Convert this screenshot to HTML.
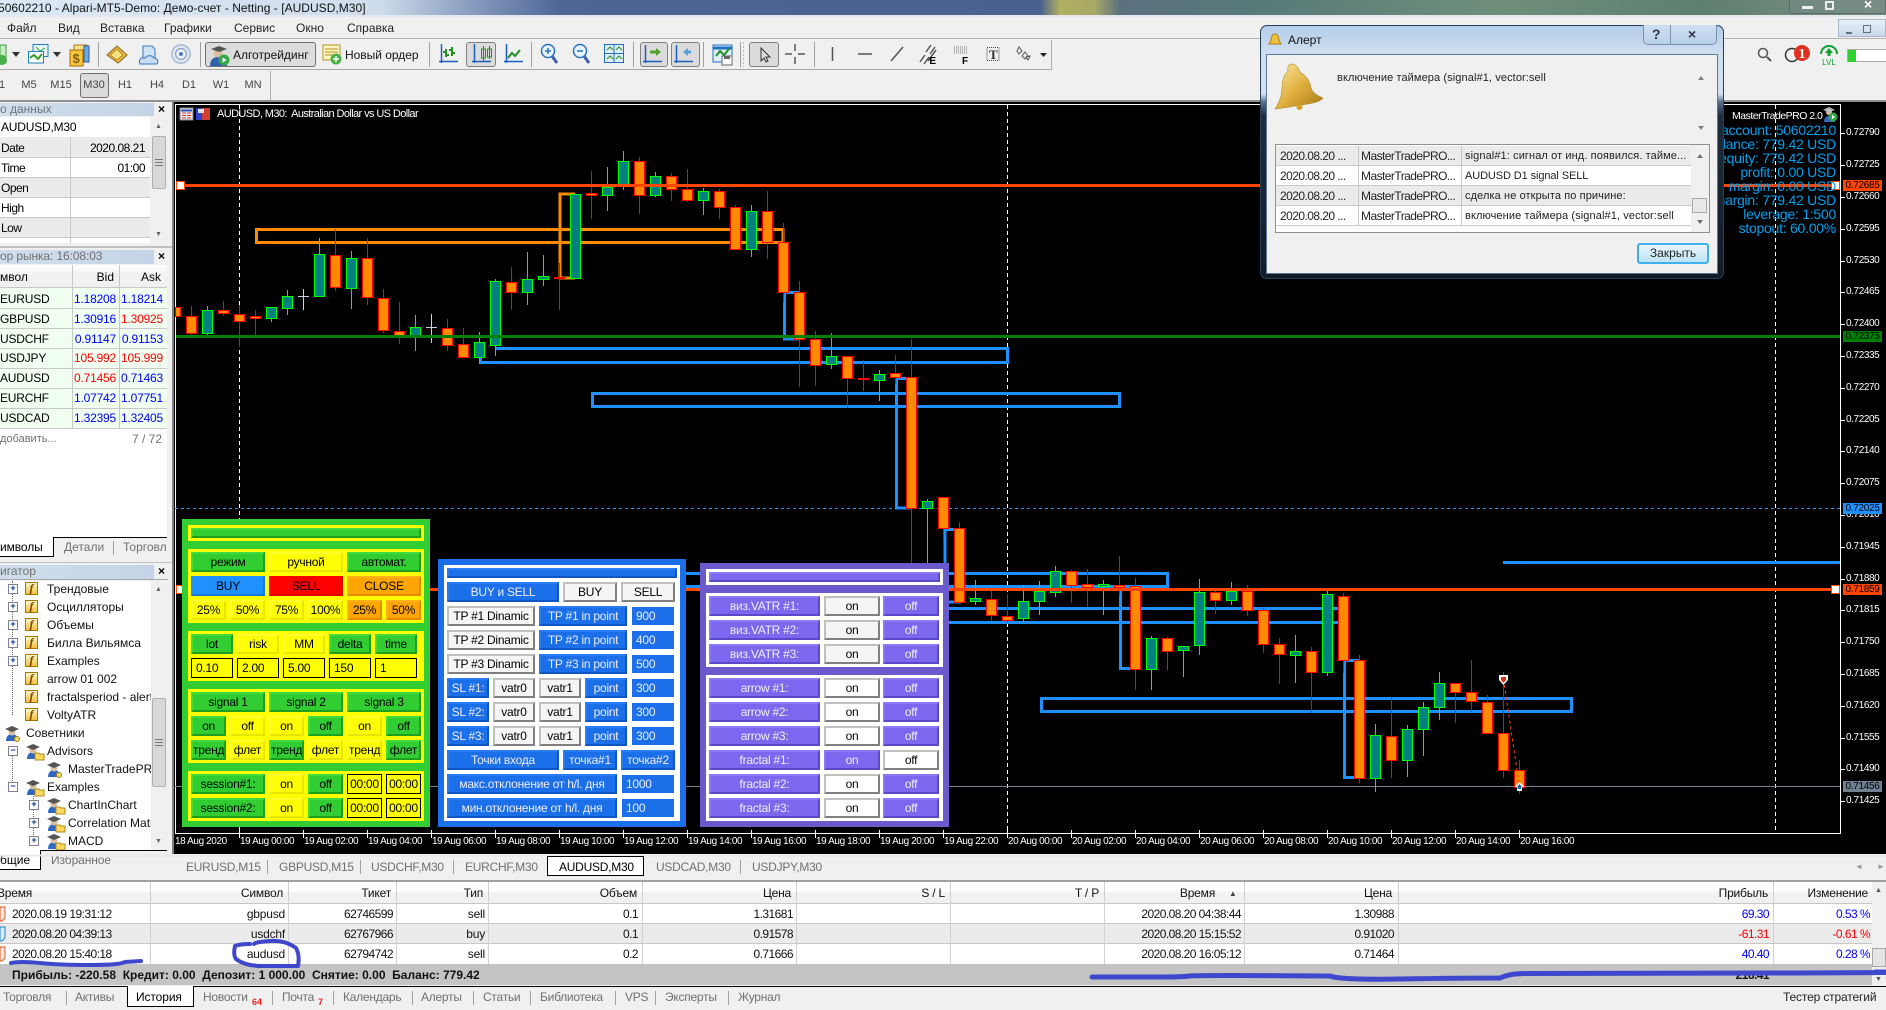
<!DOCTYPE html>
<html lang="ru"><head><meta charset="utf-8"><title>MT5</title>
<style>
html,body{margin:0;padding:0;background:#f0f0f0}
#p{position:relative;width:1886px;height:1010px;overflow:hidden;background:#f0f0f0;font:11px/14px "Liberation Sans",sans-serif;color:#000}
.t{position:absolute;white-space:nowrap;line-height:14px}
.s{position:absolute;background:#a0a0a0}
.f{position:absolute;box-sizing:border-box}
.g7{color:#707070}
.m{font-size:12px;color:#222}
.tf{font-size:11px;color:#444;transform:translateX(-50%)}
.b{position:absolute;box-sizing:border-box;height:20px;border:2px solid;text-align:center;line-height:16px;font-size:12px;letter-spacing:-.25px;white-space:nowrap;overflow:hidden}
.gr{background:#32cd32;border-color:#3fdc3f #1f9f1f #1f9f1f #3fdc3f}
.ye{background:#ff0;border-color:#ffff30 #e6e600 #e6e600 #ffff30}
.or{background:#ffa500;border-color:#ffb01a #e68a00 #e68a00 #ffb01a}
.bu{background:#1e90ff;border-color:#1e90ff #1878d8 #1878d8 #1e90ff}
.re{background:#f00;border-color:#f00 #e00000 #e00000 #f00}
.i{background:#ff0;border:1px solid #000;text-align:left;padding-left:4px;line-height:18px}
.ic{text-align:center;padding:0}
.B{background:#1b6fe8;border-color:#2a7cf0 #0f55c4 #0f55c4 #2a7cf0;color:#eef}
.W{background:#f5f5f5;border-color:#c0c0c0 #808080 #808080 #c0c0c0}
.E{background:#1b6fe8;border:0;color:#eef;text-align:left;padding-left:4px;height:18px;line-height:18px}
.P{background:#7b68ee;border-color:#8a78f4 #5a48c8 #5a48c8 #8a78f4;color:#f0f0f0}
.H{background:#fff;border-color:#c0c0c0 #808080 #808080 #c0c0c0}
.S{background:#f5f5f5;border-color:#c0c0c0 #808080 #808080 #c0c0c0}
.ax{position:absolute;color:#fff;font-size:10px;letter-spacing:-.4px;line-height:12px;white-space:nowrap}
.pl{position:absolute;left:1843px;width:39px;height:11px;line-height:11px;font-size:10px;letter-spacing:-.3px;text-align:center;color:#000}
.ti{position:absolute;right:50px;color:#00a0f0;font-size:14px;line-height:14px;letter-spacing:-.25px;white-space:nowrap}
.fi{position:absolute;width:11px;height:11px;border:1px solid #a87800;background:linear-gradient(#fff6c8,#f5c040);color:#7a4a00;font:italic bold 12px/11px "Liberation Serif",serif;text-align:center}
.tb{position:absolute;width:8px;height:8px;border:1px solid #808090;background:#fff;color:#003090;font:bold 9px/7px "Liberation Sans",sans-serif;text-align:center}
.tr{font-size:12px;color:#111}
.c{position:absolute;white-space:nowrap;color:#111;font-size:12px;letter-spacing:-.55px}
.v{position:absolute;width:1px;background:#d0d0d0}
.d{position:absolute;white-space:nowrap;color:#222;line-height:14px;font-size:12px;letter-spacing:-.55px}
.dw{font-size:12px;letter-spacing:-.5px}
</style></head><body><div id="p">

<!-- title bar -->
<div class="f" style="left:0;top:0;width:1886px;height:17px;background:linear-gradient(90deg,#dbe8f5 0,#cfdcec 380px,#8fa3c4 460px,#4f6595 560px,#4a6090 1040px,#b0b060 1060px,#a8a868 1095px,#5a7080 1120px,#587a78 1260px,#6f8f7a 1500px,#5f7f70 1700px,#7a9080 1886px);border-bottom:2px solid #e4e8ee"></div>
<div class="t" style="left:-2px;top:1px;font-size:12px;letter-spacing:.03px;color:#111">50602210 - Alpari-MT5-Demo: Демо-счет - Netting - [AUDUSD,M30]</div>
<div class="f" style="left:1789px;top:-4px;width:97px;height:18px;border:1px solid #5a6a70;border-radius:3px;background:rgba(120,140,140,.4)"></div>
<div class="f" style="left:1802px;top:6px;width:11px;height:3px;background:#eee"></div>
<div class="f" style="left:1825px;top:1px;width:9px;height:9px;border:2px solid #eee"></div>
<div class="t" style="left:1864px;top:-3px;color:#fff;font-weight:bold;font-size:14px">×</div>

<!-- menu -->
<div class="t m" style="left:7px;top:21px">Файл</div><div class="t m" style="left:58px;top:21px">Вид</div><div class="t m" style="left:100px;top:21px">Вставка</div><div class="t m" style="left:164px;top:21px">Графики</div><div class="t m" style="left:234px;top:21px">Сервис</div><div class="t m" style="left:296px;top:21px">Окно</div><div class="t m" style="left:347px;top:21px">Справка</div>
<div class="s" style="left:0;top:38px;width:1886px;height:1px;background:#b4b4b4"></div>
<div class="f" style="left:1838px;top:19px;width:48px;height:18px;background:linear-gradient(#e8f0f8,#c8d8ea);border:1px solid #a8b8c8"></div>
<div class="s" style="left:1846px;top:32px;width:6px;height:2px;background:#607080"></div><div class="f" style="left:1863px;top:25px;width:8px;height:8px;border:1px solid #607080"></div>

<!-- toolbar -->
<div class="s" style="left:0;top:69px;width:1052px;height:1px;background:#a8a8a8"></div>
<div class="s" style="left:1051px;top:40px;width:1px;height:30px;background:#b0b0b0"></div>
<div class="s" style="left:98px;top:42px;width:1px;height:25px"></div><div class="s" style="left:200px;top:42px;width:1px;height:25px"></div><div class="s" style="left:429px;top:42px;width:1px;height:25px"></div><div class="s" style="left:531px;top:42px;width:1px;height:25px"></div><div class="s" style="left:633px;top:42px;width:1px;height:25px"></div><div class="s" style="left:703px;top:42px;width:1px;height:25px"></div><div class="s" style="left:740px;top:42px;width:1px;height:25px"></div><div class="s" style="left:814px;top:42px;width:1px;height:25px"></div>
<div class="f" style="left:205px;top:42px;width:111px;height:25px;border:1px solid #707070;border-radius:3px;background:#dcdcdc"></div>
<div class="f" style="left:466px;top:42px;width:30px;height:25px;border:1px solid #808080;border-radius:3px;background:#dcdcdc"></div>
<div class="f" style="left:640px;top:42px;width:28px;height:25px;border:1px solid #808080;border-radius:3px;background:#dcdcdc"></div>
<div class="f" style="left:671px;top:42px;width:29px;height:25px;border:1px solid #808080;border-radius:3px;background:#dcdcdc"></div>
<div class="f" style="left:749px;top:42px;width:30px;height:25px;border:1px solid #808080;border-radius:3px;background:#dcdcdc"></div>
<div class="t" style="left:233px;top:48px;font-size:12px;letter-spacing:-.02px;color:#111">Алготрейдинг</div>
<div class="t" style="left:345px;top:48px;font-size:12px;letter-spacing:-.02px;color:#111">Новый ордер</div>
<svg style="position:absolute;left:0;top:0" width="1886" height="102" viewBox="0 0 1886 102" fill="none">
<path d="M0 45h6v18H0z" fill="#c8ecc8" stroke="#3aa03a"/><circle cx="2" cy="60" r="5" fill="#48b048"/>
<path d="M12 52h8l-4 5zM53 52h8l-4 5z" fill="#333"/>
<path d="M33 44.500h15v12H33z" fill="#e8f4fc" stroke="#2080c0"/><path d="M28.500 51.500h15v11.500h-15z" fill="#fff" stroke="#2080c0"/><path d="M30 58l4-3 4 4 4-5" stroke="#30a030" stroke-width="2"/><path d="M36 47l4 4 5-3" stroke="#30a030"/>
<path d="M74 45h13v17H74z" fill="#ffe088" stroke="#b07818"/><path d="M70 50h13v16H70z" fill="#f8c840" stroke="#a86800"/><path d="M84 46h5v16h-5z" fill="#70a8e0" stroke="#3060a0"/>
<text x="72.500" y="63" font-family="Liberation Sans" font-size="13" font-weight="bold" fill="#806000">$</text>
<path d="M107 55l10-9 10 9-9 8z" fill="#e8c050" stroke="#906010"/><path d="M110 55l7-6 6 6-6 5z" fill="#f8e080" stroke="#b88010"/>
<path d="M143 46h9l3 3v9h-12z" fill="#d0e4f8" stroke="#3878c0"/><path d="M140 64c-2-5 2-7 5-6 2-3 7-3 9 0 3 0 5 3 3 6z" fill="#c8dcf4" stroke="#3878c0"/>
<circle cx="181" cy="54" r="9" stroke="#b0c4e0" stroke-width="2"/><circle cx="181" cy="54" r="5.500" stroke="#90a8d0" stroke-width="1.500"/><circle cx="181" cy="54" r="2" fill="#5078c0"/>
<path d="M210 66c0-6 3-9 8-9s9 2 9 9z" fill="#3060b0"/><circle cx="218" cy="53" r="4.500" fill="#d8c0a0"/><path d="M211 49l8-3 8 3-8 3z" fill="#555"/><circle cx="224" cy="60" r="5.500" fill="#38a848"/><path d="M222.500 57.500l4 2.500-4 2.500z" fill="#fff"/>
<path d="M323 45h17v15h-17z" fill="#fff6c0" stroke="#b89020"/><path d="M325 49h13M325 52h13M325 55h13" stroke="#b89020"/><circle cx="336" cy="59" r="5.500" fill="#48b048"/><path d="M333 59h6M336 56v6" stroke="#fff" stroke-width="1.500"/>
<path d="M441.500 44v19M439 61.500h19" stroke="#1a5fc0" stroke-width="1.500"/><path d="M446 49v8M443 52h3M446 55h3M452 47v9M449 50h3M452 53h3" stroke="#209020" stroke-width="2"/>
<path d="M474.500 44v19M472 61.500h19" stroke="#1a5fc0" stroke-width="1.500"/><path d="M481.500 49h4v9h-4zM487.500 49h4v8h-4z" stroke="#209020"/><path d="M483.500 46v15M489.500 46v13" stroke="#209020"/>
<path d="M506.500 44v19M504 61.500h19" stroke="#1a5fc0" stroke-width="1.500"/><path d="M508 58l4-5 3 3 5-6" stroke="#209020" stroke-width="2"/>
<circle cx="548" cy="51" r="6.500" fill="#e8f4ff" stroke="#2a70c0" stroke-width="1.500"/><path d="M545 51h6M548 48v6" stroke="#2a70c0" stroke-width="1.500"/><path d="M552 56l5 7" stroke="#4060a0" stroke-width="3"/>
<circle cx="580" cy="51" r="6.500" fill="#e8f4ff" stroke="#2a70c0" stroke-width="1.500"/><path d="M577 51h6" stroke="#2a70c0" stroke-width="1.500"/><path d="M584 56l5 7" stroke="#4060a0" stroke-width="3"/>
<path d="M604.500 44.500h19v18h-19z" fill="#e0f0fa" stroke="#2070c0"/><path d="M604 53.500h20M614 44v19" stroke="#2070c0"/><path d="M607 50l3-3 3 3M616 50l3-3 3 3M607 59l3-3 3 3M616 59l3-3 3 3" stroke="#209020"/>
<path d="M645.500 45v18M643 61.500h19" stroke="#1a5fc0" stroke-width="1.500"/><path d="M650 52h7" stroke="#50a030" stroke-width="3"/><path d="M656 48l5 4-5 4z" fill="#50a030"/>
<path d="M676.500 45v18M674 61.500h19" stroke="#1a5fc0" stroke-width="1.500"/><path d="M691 52h-5" stroke="#50a0e0" stroke-width="3"/><path d="M688 48l-5 4 5 4z" fill="#50a0e0"/>
<path d="M713 45h19v17h-19z" fill="#e0f0fa" stroke="#2070c0"/><path d="M713 48h19" stroke="#2070c0" stroke-width="3"/><path d="M716 56l4-5 4 4 5-6" stroke="#209020" stroke-width="2"/><path d="M722 56h10v9h-10z" fill="#fff" stroke="#666"/><path d="M724 56h6v3h-6z" fill="#666"/>
<path d="M743.500 42v25" stroke="#bbb" stroke-dasharray="2 2"/>
<path d="M761 48l0 13 3-3 2 4 2-1-2-4h4z" fill="#ddd" stroke="#333"/>
<path d="M795 44v7M795 57v7M785 54h7M798 54h7" stroke="#555" stroke-width="1.500"/>
<path d="M832.500 47v14" stroke="#555" stroke-width="1.500"/><path d="M858 54h14" stroke="#555" stroke-width="1.500"/><path d="M891 61l12-14" stroke="#555" stroke-width="1.500"/>
<path d="M920 62l5-7M924 64l5-7M926 52l5-7M930 54l5-7M928 61l8-11" stroke="#555" stroke-width="1.500"/>
<path d="M954 47h13M954 49h13M954 51h13M954 53h13" stroke="#777" stroke-dasharray="1 1"/>
<text x="936" y="64" font-family="Liberation Sans" font-size="10" font-weight="bold" fill="#000" text-anchor="end">E</text>
<text x="962" y="64" font-family="Liberation Sans" font-size="10" font-weight="bold" fill="#000">F</text>
<path d="M987 47.500h12v13h-12z" stroke="#444" stroke-dasharray="1 1"/>
<text x="989" y="59" font-family="Liberation Serif" font-size="13" font-weight="bold" fill="#333">T</text>
<path d="M1019 47l3 4-3 3-2-3zM1025 52l3 4-3 3-3-3zM1030 56l-2 4-2-3z" stroke="#555"/>
<path d="M1040 53h7l-3.500 4z" fill="#222"/>
<circle cx="1763" cy="53" r="4.500" stroke="#555" stroke-width="1.500"/><path d="M1767 57l4 4" stroke="#555" stroke-width="2"/>
<circle cx="1792" cy="55" r="6.500" stroke="#333" stroke-width="1.500"/><circle cx="1802" cy="53" r="8" fill="#e03020"/>
<text x="1802" y="58" font-family="Liberation Serif" font-size="14" font-weight="bold" fill="#fff" text-anchor="middle">1</text>
<path d="M1821 54a8 8 0 0 1 16 0" stroke="#10a030" stroke-width="2"/><path d="M1829 48l-4 5h2.500v3h3v-3h2.500z" fill="#10a030"/>
<text x="1829" y="65" font-family="Liberation Sans" font-size="8" fill="#10a030" text-anchor="middle">LVL</text>
<rect x="1847.500" y="49.500" width="39" height="12" fill="#fff" stroke="#aaa"/><rect x="1848" y="50" width="8" height="12" fill="#30d030"/>
</svg>

<!-- timeframes -->
<div class="f" style="left:80px;top:73px;width:29px;height:25px;border:1px solid #707070;border-radius:3px;background:#dcdcdc"></div>
<div class="t tf" style="left:2px;top:78px">1</div><div class="t tf" style="left:29px;top:78px">M5</div><div class="t tf" style="left:61px;top:78px">M15</div><div class="t tf" style="left:94px;top:78px">M30</div><div class="t tf" style="left:125px;top:78px">H1</div><div class="t tf" style="left:157px;top:78px">H4</div><div class="t tf" style="left:189px;top:78px">D1</div><div class="t tf" style="left:221px;top:78px">W1</div><div class="t tf" style="left:253px;top:78px">MN</div>
<div class="s" style="left:270px;top:71px;width:1px;height:29px;background:#b0b0b0"></div>
<div class="s" style="left:0;top:100px;width:1886px;height:2px;background:#909090"></div>

<!-- data window -->
<div class="f" style="left:0;top:103px;width:154px;height:13px;background:linear-gradient(90deg,#d0deec,#c4d4e6)"></div>
<div class="t g7" style="left:0;top:102px;font-size:12px">о данных</div>
<div class="t" style="left:158px;top:102px;font-weight:bold;font-size:12px">×</div>
<div class="f" style="left:0;top:117px;width:150px;height:20px;background:#fff"></div>
<div class="t" style="left:1px;top:120px;font-size:12px;letter-spacing:-.2px">AUDUSD,M30</div>
<div class="f" style="left:0;top:137px;width:150px;height:20px;background:#ebebeb"></div><div class="f" style="left:0;top:157px;width:150px;height:20px;background:#fff"></div><div class="f" style="left:0;top:177px;width:150px;height:20px;background:#ebebeb"></div><div class="f" style="left:0;top:197px;width:150px;height:20px;background:#fff"></div><div class="f" style="left:0;top:217px;width:150px;height:20px;background:#ebebeb"></div><div class="f" style="left:0;top:237px;width:150px;height:6px;background:#fff"></div>
<div class="s" style="left:0;top:157px;width:150px;height:1px;background:#c8c8c8"></div><div class="s" style="left:0;top:177px;width:150px;height:1px;background:#c8c8c8"></div><div class="s" style="left:0;top:197px;width:150px;height:1px;background:#c8c8c8"></div><div class="s" style="left:0;top:217px;width:150px;height:1px;background:#c8c8c8"></div><div class="s" style="left:0;top:237px;width:150px;height:1px;background:#c8c8c8"></div>
<div class="s" style="left:70px;top:137px;width:1px;height:106px;background:#c8c8c8"></div>
<div class="t dw" style="left:1px;top:141px">Date</div><div class="t dw" style="right:1741px;top:141px">2020.08.21</div><div class="t dw" style="left:1px;top:161px">Time</div><div class="t dw" style="right:1741px;top:161px">01:00</div><div class="t dw" style="left:1px;top:181px">Open</div><div class="t dw" style="left:1px;top:201px">High</div><div class="t dw" style="left:1px;top:221px">Low</div>
<div class="f" style="left:152px;top:117px;width:15px;height:126px;background:#f0f0f0"></div>
<div class="f" style="left:152px;top:136px;width:14px;height:53px;background:#d8d8d8;border:1px solid #b0b0b0;border-radius:2px"></div>
<div class="t" style="left:155px;top:120px;font-size:7px;color:#666">▲</div><div class="t" style="left:155px;top:228px;font-size:7px;color:#666">▼</div>
<div class="s" style="left:155px;top:159px;width:8px;height:1px;background:#777"></div><div class="s" style="left:155px;top:162px;width:8px;height:1px;background:#777"></div><div class="s" style="left:155px;top:165px;width:8px;height:1px;background:#777"></div>
<div class="s" style="left:0;top:246px;width:172px;height:2px;background:#c0c0c0"></div>

<!-- market watch -->
<div class="f" style="left:0;top:250px;width:154px;height:14px;background:linear-gradient(90deg,#d0deec,#c4d4e6)"></div>
<div class="t g7" style="left:0;top:249px;font-size:12px;letter-spacing:-.1px">ор рынка: 16:08:03</div>
<div class="t" style="left:158px;top:249px;font-weight:bold;font-size:12px">×</div>
<div class="f" style="left:0;top:265px;width:167px;height:23px;background:linear-gradient(#fff,#f2f2f2 40%,#f0f0f0);border-bottom:1px solid #c8c8c8"></div>
<div class="f" style="left:0;top:288px;width:167px;height:140px;background:#f0fff0"></div>
<div class="f" style="left:0;top:428px;width:167px;height:109px;background:#fff"></div>
<div class="t dw" style="left:0;top:270px;letter-spacing:0">мвол</div><div class="t" style="right:1772px;top:270px;font-size:12px">Bid</div><div class="t" style="right:1725px;top:270px;font-size:12px">Ask</div>
<div class="s" style="left:0;top:308px;width:167px;height:1px;background:#c8c8c8"></div><div class="s" style="left:0;top:328px;width:167px;height:1px;background:#c8c8c8"></div><div class="s" style="left:0;top:348px;width:167px;height:1px;background:#c8c8c8"></div><div class="s" style="left:0;top:368px;width:167px;height:1px;background:#c8c8c8"></div><div class="s" style="left:0;top:388px;width:167px;height:1px;background:#c8c8c8"></div><div class="s" style="left:0;top:408px;width:167px;height:1px;background:#c8c8c8"></div><div class="s" style="left:0;top:428px;width:167px;height:1px;background:#c8c8c8"></div>
<div class="s" style="left:72px;top:265px;width:1px;height:163px;background:#c8c8c8"></div><div class="s" style="left:119px;top:265px;width:1px;height:163px;background:#c8c8c8"></div>
<div class="t" style="left:0;top:292px;font-size:12px;letter-spacing:-.2px">EURUSD</div><div class="t" style="right:1770px;top:292px;font-size:12px;letter-spacing:-.2px;color:#00f">1.18208</div><div class="t" style="right:1723px;top:292px;font-size:12px;letter-spacing:-.2px;color:#00f">1.18214</div>
<div class="t" style="left:0;top:312px;font-size:12px;letter-spacing:-.2px">GBPUSD</div><div class="t" style="right:1770px;top:312px;font-size:12px;letter-spacing:-.2px;color:#00f">1.30916</div><div class="t" style="right:1723px;top:312px;font-size:12px;letter-spacing:-.2px;color:#f00">1.30925</div>
<div class="t" style="left:0;top:332px;font-size:12px;letter-spacing:-.2px">USDCHF</div><div class="t" style="right:1770px;top:332px;font-size:12px;letter-spacing:-.2px;color:#00f">0.91147</div><div class="t" style="right:1723px;top:332px;font-size:12px;letter-spacing:-.2px;color:#00f">0.91153</div>
<div class="t" style="left:0;top:351px;font-size:12px;letter-spacing:-.2px">USDJPY</div><div class="t" style="right:1770px;top:351px;font-size:12px;letter-spacing:-.2px;color:#f00">105.992</div><div class="t" style="right:1723px;top:351px;font-size:12px;letter-spacing:-.2px;color:#f00">105.999</div>
<div class="t" style="left:0;top:371px;font-size:12px;letter-spacing:-.2px">AUDUSD</div><div class="t" style="right:1770px;top:371px;font-size:12px;letter-spacing:-.2px;color:#f00">0.71456</div><div class="t" style="right:1723px;top:371px;font-size:12px;letter-spacing:-.2px;color:#00f">0.71463</div>
<div class="t" style="left:0;top:391px;font-size:12px;letter-spacing:-.2px">EURCHF</div><div class="t" style="right:1770px;top:391px;font-size:12px;letter-spacing:-.2px;color:#00f">1.07742</div><div class="t" style="right:1723px;top:391px;font-size:12px;letter-spacing:-.2px;color:#00f">1.07751</div>
<div class="t" style="left:0;top:411px;font-size:12px;letter-spacing:-.2px">USDCAD</div><div class="t" style="right:1770px;top:411px;font-size:12px;letter-spacing:-.2px;color:#00f">1.32395</div><div class="t" style="right:1723px;top:411px;font-size:12px;letter-spacing:-.2px;color:#00f">1.32405</div>
<div class="t g7" style="left:0;top:432px;font-size:11px">добавить...</div><div class="t g7" style="right:1724px;top:432px;font-size:12px">7 / 72</div>
<div class="f" style="left:0;top:537px;width:54px;height:20px;background:#fff;border-right:1px solid #000;border-bottom:1px solid #000"></div>
<div class="s" style="left:54px;top:537px;width:113px;height:1px;background:#000"></div>
<div class="t" style="left:0;top:540px;font-size:12px;letter-spacing:-.1px">имволы</div><div class="t g7" style="left:64px;top:540px;font-size:12px">Детали</div><div class="s" style="left:113px;top:541px;width:1px;height:14px"></div>
<div class="t g7" style="left:123px;top:540px;font-size:12px;width:44px;overflow:hidden">Торговля</div>
<div class="s" style="left:0;top:562px;width:172px;height:1px;background:#c0c0c0"></div>

<!-- navigator -->
<div class="f" style="left:0;top:565px;width:154px;height:14px;background:linear-gradient(90deg,#d0deec,#c4d4e6)"></div>
<div class="t g7" style="left:0;top:564px;font-size:12px">игатор</div>
<div class="t" style="left:158px;top:564px;font-weight:bold;font-size:12px">×</div>
<div class="s" style="left:0;top:579px;width:168px;height:1px;background:#a8a8a8"></div>
<div class="f" style="left:0;top:581px;width:151px;height:269px;background:#fff;overflow:hidden" id="tree">
<div class="f" style="left:12px;top:0;width:1px;height:134px;border-left:1px dotted #666"></div>
<div class="f" style="left:12px;top:170px;width:1px;height:36px;border-left:1px dotted #666"></div>
<div class="f" style="left:33px;top:206px;width:1px;height:54px;border-left:1px dotted #666"></div>
<span class="tb" style="left:8px;top:3px">+</span><span class="fi" style="left:25px;top:1px">f</span><span class="t tr" style="left:47px;top:1px">Трендовые</span>
<span class="tb" style="left:8px;top:21px">+</span><span class="fi" style="left:25px;top:19px">f</span><span class="t tr" style="left:47px;top:19px">Осцилляторы</span>
<span class="tb" style="left:8px;top:39px">+</span><span class="fi" style="left:25px;top:37px">f</span><span class="t tr" style="left:47px;top:37px">Объемы</span>
<span class="tb" style="left:8px;top:57px">+</span><span class="fi" style="left:25px;top:55px">f</span><span class="t tr" style="left:47px;top:55px">Билла Вильямса</span>
<span class="tb" style="left:8px;top:75px">+</span><span class="fi" style="left:25px;top:73px">f</span><span class="t tr" style="left:47px;top:73px">Examples</span>
<span class="fi" style="left:25px;top:91px">f</span><span class="t tr" style="left:47px;top:91px">arrow 01 002</span>
<span class="fi" style="left:25px;top:109px">f</span><span class="t tr" style="left:47px;top:109px">fractalsperiod - alert</span>
<span class="fi" style="left:25px;top:127px">f</span><span class="t tr" style="left:47px;top:127px">VoltyATR</span>
<svg style="position:absolute;left:0;top:0" width="151" height="269" fill="none">
<defs><g id="h"><path d="M1 15c0-5 3-7 6-7s6 2 6 7z" fill="#3068c0"/><circle cx="7" cy="6" r="3.500" fill="#d8c0a0"/><path d="M0 3l7-3 7 3-7 3z" fill="#555"/></g><g id="fd"><path d="M9 9h4l1 1h4v6H9z" fill="#ffd860" stroke="#b08820"/></g></defs>
<use href="#h" x="5" y="145"/><circle cx="17" cy="158" r="2.500" fill="#ffd860" stroke="#a08020"/>
<use href="#h" x="26" y="163"/><use href="#fd" x="26" y="163"/>
<use href="#h" x="47" y="181"/><circle cx="59" cy="194" r="2.500" fill="#ffd860" stroke="#a08020"/>
<use href="#h" x="26" y="199"/><use href="#fd" x="26" y="199"/>
<use href="#h" x="47" y="217"/><use href="#fd" x="47" y="217"/>
<use href="#h" x="47" y="235"/><use href="#fd" x="47" y="235"/>
<use href="#h" x="47" y="253"/><use href="#fd" x="47" y="253"/>
</svg>
<span class="t tr" style="left:26px;top:145px">Советники</span>
<span class="tb" style="left:8px;top:165px">−</span><span class="t tr" style="left:47px;top:163px">Advisors</span>
<span class="t tr" style="left:68px;top:181px">MasterTradePRO 2.0</span>
<span class="tb" style="left:8px;top:201px">−</span><span class="t tr" style="left:47px;top:199px">Examples</span>
<span class="tb" style="left:29px;top:219px">+</span><span class="t tr" style="left:68px;top:217px">ChartInChart</span>
<span class="tb" style="left:29px;top:237px">+</span><span class="t tr" style="left:68px;top:235px">Correlation Matrix</span>
<span class="tb" style="left:29px;top:255px">+</span><span class="t tr" style="left:68px;top:253px">MACD</span>
</div>
<div class="f" style="left:152px;top:581px;width:15px;height:269px;background:#f0f0f0"></div>
<div class="f" style="left:152px;top:698px;width:14px;height:89px;background:#d8d8d8;border:1px solid #b0b0b0;border-radius:2px"></div>
<div class="t" style="left:155px;top:583px;font-size:7px;color:#666">▲</div><div class="t" style="left:155px;top:835px;font-size:7px;color:#666">▼</div>
<div class="s" style="left:155px;top:739px;width:8px;height:1px;background:#777"></div><div class="s" style="left:155px;top:742px;width:8px;height:1px;background:#777"></div><div class="s" style="left:155px;top:745px;width:8px;height:1px;background:#777"></div>
<div class="f" style="left:0;top:850px;width:41px;height:20px;background:#fff;border-right:1px solid #000;border-bottom:1px solid #000"></div>
<div class="s" style="left:41px;top:850px;width:126px;height:1px;background:#000"></div>
<div class="t" style="left:0;top:853px;font-size:12px">бщие</div><div class="t g7" style="left:51px;top:853px;font-size:12px;letter-spacing:-.1px">Избранное</div>

<!-- chart -->
<svg style="position:absolute;left:0;top:0" width="1886" height="860" viewBox="0 0 1886 860" fill="none">
<rect x="172" y="102" width="1714" height="752" fill="#000"/>
<rect x="172" y="102" width="2" height="752" fill="#808080"/>
<path d="M175.500 104.500H1840.500V833.500H175.500Z" stroke="#fff"/>
<path d="M0 855.500H1886" stroke="#e8e8e8" stroke-width="2"/>
<path d="M239.500 105V833M1007.500 105V833M1775.500 105V833" stroke="#fff" stroke-dasharray="4 3"/>
<path d="M256.500 229.500H783V242.500H256.500ZM575 194H560V278H575" stroke="#ff8c00" stroke-width="3"/>
<path d="M495 348.500H1007.500V362.500H480.500V352M799 292.500H784.500V339H799M592.500 393.500H1119.500V406.500H592.500ZM911 378.500H896.500V508H911M961 529.500H945V602H961M650 573.500H1167.500V586.500H650M760 608.500H1340M760 622.500H1340M1135 587.500H1120.500V668.500H1135M1359 660.500H1344.500V777.500H1359M1041.500 698.500H1571.500V711.500H1041.500Z" stroke="#1e90ff" stroke-width="3"/>
<path d="M1503 562.500H1840" stroke="#1e90ff" stroke-width="3"/>
<path d="M175 508.500H1840" stroke="#1e90ff" stroke-dasharray="3 3"/>
<path d="M175 786.500H1840" stroke="#708090"/>
<path stroke="#0f0" d="M207.500 306V335M271.500 307V322M287.500 290V315M319.500 238V297M351.500 251V309M415.500 315V351M479.500 332V364M495.500 279V356M527.500 252V305M543.500 255V286M607.500 167V211M623.500 151V190M655.500 172V197M703.500 188V215M751.500 205V257M831.500 333V369M879.500 370V401M927.500 499V563M975.500 580V605M1023.500 585V622M1039.500 581V615M1055.500 566V597M1103.500 580V615M1151.500 636V690M1183.500 646V677M1199.500 579V655M1231.500 582V605M1295.500 635V683M1327.500 591V676M1375.500 724V792M1407.500 725V777M1423.500 702V756M1439.500 672V720"/>
<path fill="#008080" stroke="#0f0" d="M202.500 310.500h10v23h-10zM266.500 307.500h10v11h-10zM282.500 296.500h10v12h-10zM314.500 254.500h10v42h-10zM346.500 258.500h10v30h-10zM410.500 327.500h10v9h-10zM474.500 342.500h10v15h-10zM490.500 281.500h10v64h-10zM522.500 279.500h10v13h-10zM538.500 276.500h10v3h-10zM570.500 194.500h10v84h-10zM602.500 187.500h10v8h-10zM618.500 161.500h10v24h-10zM650.500 176.500h10v19h-10zM698.500 191.500h10v9h-10zM746.500 211.500h10v38h-10zM826.500 356.500h10v8h-10zM874.500 374.500h10v6h-10zM922.500 501.500h10v7h-10zM970.500 598.500h10v3h-10zM1018.500 601.500h10v17h-10zM1034.500 591.500h10v10h-10zM1050.500 571.500h10v21h-10zM1098.500 584.500h10v2h-10zM1146.500 638.500h10v31h-10zM1178.500 646.500h10v4h-10zM1194.500 592.500h10v53h-10zM1226.500 591.500h10v9h-10zM1290.500 651.500h10v4h-10zM1322.500 594.500h10v78h-10zM1370.500 735.500h10v43h-10zM1402.500 729.500h10v31h-10zM1418.500 707.500h10v22h-10zM1434.500 683.500h10v24h-10z"/>
<path stroke="#c8d4e4" d="M303.500 289V310M298 296.500H309M431.500 314V343M426 327.500H437"/>
<path stroke="#f00" d="M191.500 306V335M223.500 301V316M239.500 305V347M255.500 310V335M335.500 229V291M367.500 238V305M383.500 289V333M399.500 302V344M447.500 319V351M463.500 328V358M511.500 267V310M559.500 263V310M591.500 171V219M639.500 157V214M671.500 173V201M687.500 169V202M719.500 189V219M735.500 205V250M767.500 191V259M783.500 223V303M799.500 281V387M815.500 331V386M847.500 356V408M863.500 360V391M895.500 355V384M911.500 339V563M943.500 497V541M959.500 522V603M991.500 590V621M1007.500 594V623M1071.500 570V603M1087.500 569V607M1119.500 556V596M1135.500 578V690M1167.500 637V670M1215.500 591V614M1247.500 585V616M1263.500 608V653M1279.500 638V684M1311.500 647V713M1343.500 593V673M1359.500 655V783M1391.500 697V778M1455.500 683V723M1471.500 660V712M1487.500 695V733M1503.500 672V778M1519.500 760V794"/>
<path fill="#ff8c00" stroke="#f00" d="M175.500 307.500h5v9h-5zM186.500 316.500h10v17h-10zM218.500 310.500h10v3h-10zM234.500 314.500h10v7h-10zM250.500 316.500h10v2h-10zM330.500 255.500h10v32h-10zM362.500 258.500h10v39h-10zM378.500 298.500h10v32h-10zM394.500 331.500h10v5h-10zM442.500 328.500h10v17h-10zM458.500 344.500h10v13h-10zM506.500 282.500h10v10h-10zM554.500 277.500h10v1h-10zM586.500 193.500h10v2h-10zM634.500 161.500h10v34h-10zM666.500 176.500h10v13h-10zM682.500 189.500h10v11h-10zM714.500 191.500h10v16h-10zM730.500 207.500h10v42h-10zM762.500 211.500h10v31h-10zM778.500 242.500h10v50h-10zM794.500 292.500h10v47h-10zM810.500 339.500h10v26h-10zM842.500 356.500h10v22h-10zM858.500 378.500h10v1h-10zM890.500 373.500h10v4h-10zM906.500 377.500h10v131h-10zM938.500 497.500h10v31h-10zM954.500 528.500h10v74h-10zM986.500 599.500h10v16h-10zM1002.500 616.500h10v4h-10zM1066.500 571.500h10v14h-10zM1082.500 584.500h10v3h-10zM1114.500 585.500h10v2h-10zM1130.500 586.500h10v83h-10zM1162.500 638.500h10v13h-10zM1210.500 592.500h10v8h-10zM1242.500 591.500h10v19h-10zM1258.500 610.500h10v34h-10zM1274.500 644.500h10v10h-10zM1306.500 651.500h10v21h-10zM1338.500 596.500h10v64h-10zM1354.500 660.500h10v118h-10zM1386.500 736.500h10v24h-10zM1450.500 683.500h10v9h-10zM1466.500 692.500h10v9h-10zM1482.500 702.500h10v31h-10zM1498.500 733.500h10v37h-10zM1514.500 770.500h10v17h-10z"/>
<rect x="176" y="184" width="1664" height="3" fill="#ff4500"/>
<rect x="176" y="335" width="1664" height="3" fill="#008000"/>
<rect x="176" y="588" width="1664" height="3" fill="#ff4500"/>
<path d="M176.500 181.500h8v8h-8zM176.500 585.500h8v8h-8zM1831.500 181.500h8v8h-8zM1831.500 585.500h8v8h-8z" fill="#fff" stroke="#ff4500"/>
<path d="M1503.500 679L1519.500 787" stroke="#ff4500" stroke-dasharray="3 3"/>
<path d="M1499 675h9v5l-4.500 5-4.500-5z" fill="#fff"/><path d="M1501 677h5v3l-2.500 3-2.500-3z" fill="#d83010"/>
<path d="M1519.500 782l5 5h-2.500v4h-5v-4h-2.500z" fill="#fff"/><path d="M1519.500 784l2.500 3h-1v2h-3v-2h-1z" fill="#0868a8"/>
<path stroke="#fff" d="M1841 133.500h4M1841 165.500h4M1841 197.500h4M1841 229.500h4M1841 261.500h4M1841 292.500h4M1841 324.500h4M1841 356.500h4M1841 388.500h4M1841 420.500h4M1841 451.500h4M1841 483.500h4M1841 515.500h4M1841 547.500h4M1841 579.500h4M1841 610.500h4M1841 642.500h4M1841 674.500h4M1841 706.500h4M1841 738.500h4M1841 769.500h4M1841 801.500h4"/>
<path stroke="#fff" d="M239.500 830V838M303.500 830V838M367.500 830V838M431.500 830V838M495.500 830V838M559.500 830V838M623.500 830V838M687.500 830V838M751.500 830V838M815.500 830V838M879.500 830V838M943.500 830V838M1007.500 830V838M1071.500 830V838M1135.500 830V838M1199.500 830V838M1263.500 830V838M1327.500 830V838M1391.500 830V838M1455.500 830V838M1519.500 830V838"/>
<rect x="180" y="108" width="13" height="12" fill="#e8e8f8" stroke="#808080"/><path d="M181 110.500h11" stroke="#3050c0" stroke-width="2"/><path d="M182 113h4M187 113h4M182 115.500h4M187 115.500h4M182 118h4M187 118h4" stroke="#d04020"/>
<rect x="196" y="108" width="6" height="12" fill="#3040d0"/><rect x="202" y="108" width="8" height="12" fill="#d04030"/><rect x="198" y="109" width="6" height="4" fill="#e0e0e0"/>
<path d="M1824 122c0-4 2-6 5-6s6 2 6 6z" fill="#3068c0"/><circle cx="1829" cy="112" r="3" fill="#d8c0a0"/><path d="M1823 110l6-3 6 3-6 2z" fill="#bbb"/><circle cx="1833" cy="117" r="4.500" fill="#38a848"/><path d="M1832 115l3 2-3 2z" fill="#fff"/>
</svg>
<div class="t" style="left:217px;top:107px;color:#fff;font-size:11px;letter-spacing:-.6px">AUDUSD, M30:&nbsp; Australian Dollar vs US Dollar</div>

<!-- price axis labels -->
<div class="ax" style="left:1846px;top:127px">0.72790</div><div class="ax" style="left:1846px;top:159px">0.72725</div><div class="ax" style="left:1846px;top:191px">0.72660</div><div class="ax" style="left:1846px;top:223px">0.72595</div><div class="ax" style="left:1846px;top:255px">0.72530</div><div class="ax" style="left:1846px;top:286px">0.72465</div><div class="ax" style="left:1846px;top:318px">0.72400</div><div class="ax" style="left:1846px;top:350px">0.72335</div><div class="ax" style="left:1846px;top:382px">0.72270</div><div class="ax" style="left:1846px;top:414px">0.72205</div><div class="ax" style="left:1846px;top:445px">0.72140</div><div class="ax" style="left:1846px;top:477px">0.72075</div><div class="ax" style="left:1846px;top:509px">0.72010</div><div class="ax" style="left:1846px;top:541px">0.71945</div><div class="ax" style="left:1846px;top:573px">0.71880</div><div class="ax" style="left:1846px;top:604px">0.71815</div><div class="ax" style="left:1846px;top:636px">0.71750</div><div class="ax" style="left:1846px;top:668px">0.71685</div><div class="ax" style="left:1846px;top:700px">0.71620</div><div class="ax" style="left:1846px;top:732px">0.71555</div><div class="ax" style="left:1846px;top:763px">0.71490</div><div class="ax" style="left:1846px;top:795px">0.71425</div>
<div class="pl" style="top:180px;background:#ff4500">0.72685</div><div class="pl" style="top:331px;background:#008000">0.72375</div><div class="pl" style="top:503px;background:#1e90ff">0.72025</div><div class="pl" style="top:584px;background:#ff4500">0.71859</div><div class="pl" style="top:781px;background:#708090">0.71456</div>

<!-- time axis labels -->
<div class="ax" style="left:175px;top:836px">18 Aug 2020</div><div class="ax" style="left:240px;top:836px">19 Aug 00:00</div><div class="ax" style="left:304px;top:836px">19 Aug 02:00</div><div class="ax" style="left:368px;top:836px">19 Aug 04:00</div><div class="ax" style="left:432px;top:836px">19 Aug 06:00</div><div class="ax" style="left:496px;top:836px">19 Aug 08:00</div><div class="ax" style="left:560px;top:836px">19 Aug 10:00</div><div class="ax" style="left:624px;top:836px">19 Aug 12:00</div><div class="ax" style="left:688px;top:836px">19 Aug 14:00</div><div class="ax" style="left:752px;top:836px">19 Aug 16:00</div><div class="ax" style="left:816px;top:836px">19 Aug 18:00</div><div class="ax" style="left:880px;top:836px">19 Aug 20:00</div><div class="ax" style="left:944px;top:836px">19 Aug 22:00</div><div class="ax" style="left:1008px;top:836px">20 Aug 00:00</div><div class="ax" style="left:1072px;top:836px">20 Aug 02:00</div><div class="ax" style="left:1136px;top:836px">20 Aug 04:00</div><div class="ax" style="left:1200px;top:836px">20 Aug 06:00</div><div class="ax" style="left:1264px;top:836px">20 Aug 08:00</div><div class="ax" style="left:1328px;top:836px">20 Aug 10:00</div><div class="ax" style="left:1392px;top:836px">20 Aug 12:00</div><div class="ax" style="left:1456px;top:836px">20 Aug 14:00</div><div class="ax" style="left:1520px;top:836px">20 Aug 16:00</div>

<!-- info text -->
<div class="t" style="left:1732px;top:109px;color:#fff;font-size:10.500px;letter-spacing:-.5px">MasterTradePRO 2.0</div>
<div class="ti" style="top:123px">account: 50602210</div><div class="ti" style="top:137px">balance: 779.42 USD</div><div class="ti" style="top:151px">equity: 779.42 USD</div><div class="ti" style="top:165px">profit: 0.00 USD</div><div class="ti" style="top:179px">margin: 0.00 USD</div><div class="ti" style="top:193px">fr.margin: 779.42 USD</div><div class="ti" style="top:207px">leverage: 1:500</div><div class="ti" style="top:221px">stopout: 60.00%</div>

<!-- green panel -->
<div class="f" style="left:182px;top:519px;width:248px;height:308px;background:#32cd32"></div>
<div class="f" style="left:188px;top:525px;width:236px;height:16px;background:#ff0"></div>
<div class="f gr" style="left:191px;top:528px;width:230px;height:10px;border:2px solid;border-color:#3fdc3f #1f9f1f #1f9f1f #3fdc3f"></div>
<div class="f" style="left:188px;top:549px;width:236px;height:74px;background:#ff0"></div>
<div class="f" style="left:188px;top:631px;width:236px;height:50px;background:#ff0"></div>
<div class="f" style="left:188px;top:689px;width:236px;height:74px;background:#ff0"></div>
<div class="f" style="left:188px;top:771px;width:236px;height:50px;background:#ff0"></div>
<div class="b gr" style="left:191px;top:552px;width:74px">режим</div><div class="b ye" style="left:269px;top:552px;width:74px">ручной</div><div class="b gr" style="left:347px;top:552px;width:74px">автомат.</div>
<div class="b bu" style="left:191px;top:576px;width:74px">BUY</div><div class="b re" style="left:269px;top:576px;width:74px">SELL</div><div class="b or" style="left:347px;top:576px;width:74px">CLOSE</div>
<div class="b ye" style="left:191px;top:600px;width:35px">25%</div><div class="b ye" style="left:230px;top:600px;width:35px">50%</div><div class="b ye" style="left:269px;top:600px;width:35px">75%</div><div class="b ye" style="left:308px;top:600px;width:35px">100%</div><div class="b or" style="left:347px;top:600px;width:35px;background:#ffa500">25%</div><div class="b or" style="left:386px;top:600px;width:35px">50%</div>
<div class="b gr" style="left:191px;top:634px;width:42px">lot</div><div class="b ye" style="left:237px;top:634px;width:42px">risk</div><div class="b ye" style="left:283px;top:634px;width:42px">MM</div><div class="b gr" style="left:329px;top:634px;width:42px">delta</div><div class="b gr" style="left:375px;top:634px;width:42px">time</div>
<div class="b i" style="left:191px;top:658px;width:42px">0.10</div><div class="b i" style="left:237px;top:658px;width:42px">2.00</div><div class="b i" style="left:283px;top:658px;width:42px">5.00</div><div class="b i" style="left:329px;top:658px;width:42px">150</div><div class="b i" style="left:375px;top:658px;width:42px">1</div>
<div class="b gr" style="left:191px;top:692px;width:74px">signal 1</div><div class="b gr" style="left:269px;top:692px;width:74px">signal 2</div><div class="b gr" style="left:347px;top:692px;width:74px">signal 3</div>
<div class="b gr" style="left:191px;top:716px;width:35px">on</div><div class="b ye" style="left:230px;top:716px;width:35px">off</div><div class="b ye" style="left:269px;top:716px;width:35px">on</div><div class="b gr" style="left:308px;top:716px;width:35px">off</div><div class="b ye" style="left:347px;top:716px;width:35px">on</div><div class="b gr" style="left:386px;top:716px;width:35px">off</div>
<div class="b gr" style="left:191px;top:740px;width:35px">тренд</div><div class="b ye" style="left:230px;top:740px;width:35px">флет</div><div class="b gr" style="left:269px;top:740px;width:35px">тренд</div><div class="b ye" style="left:308px;top:740px;width:35px">флет</div><div class="b ye" style="left:347px;top:740px;width:35px">тренд</div><div class="b gr" style="left:386px;top:740px;width:35px">флет</div>
<div class="b gr" style="left:191px;top:774px;width:74px">session#1:</div><div class="b ye" style="left:269px;top:774px;width:35px">on</div><div class="b gr" style="left:308px;top:774px;width:35px">off</div><div class="b i ic" style="left:347px;top:774px;width:35px">00:00</div><div class="b i ic" style="left:386px;top:774px;width:35px">00:00</div>
<div class="b gr" style="left:191px;top:798px;width:74px">session#2:</div><div class="b ye" style="left:269px;top:798px;width:35px">on</div><div class="b gr" style="left:308px;top:798px;width:35px">off</div><div class="b i ic" style="left:347px;top:798px;width:35px">00:00</div><div class="b i ic" style="left:386px;top:798px;width:35px">00:00</div>

<!-- blue panel -->
<div class="f" style="left:438px;top:559px;width:248px;height:268px;background:#1b6fe8"></div>
<div class="f" style="left:444px;top:565px;width:236px;height:256px;background:#fff"></div>
<div class="f B" style="left:447px;top:568px;width:230px;height:10px;border:2px solid;border-color:#2a7cf0 #0f55c4 #0f55c4 #2a7cf0"></div>
<div class="b B" style="left:447px;top:582px;width:112px">BUY и SELL</div><div class="b W" style="left:563px;top:582px;width:54px">BUY</div><div class="b W" style="left:621px;top:582px;width:54px">SELL</div>
<div class="b W" style="left:447px;top:606px;width:88px">TP #1 Dinamic</div><div class="b B" style="left:539px;top:606px;width:88px">TP #1 in point</div><div class="b E" style="left:632px;top:607px;width:42px">900</div>
<div class="b W" style="left:447px;top:630px;width:88px">TP #2 Dinamic</div><div class="b B" style="left:539px;top:630px;width:88px">TP #2 in point</div><div class="b E" style="left:632px;top:631px;width:42px">400</div>
<div class="b W" style="left:447px;top:654px;width:88px">TP #3 Dinamic</div><div class="b B" style="left:539px;top:654px;width:88px">TP #3 in point</div><div class="b E" style="left:632px;top:655px;width:42px">500</div>
<div class="b B" style="left:447px;top:678px;width:42px">SL #1:</div><div class="b W" style="left:493px;top:678px;width:42px">vatr0</div><div class="b W" style="left:539px;top:678px;width:42px">vatr1</div><div class="b B" style="left:585px;top:678px;width:42px">point</div><div class="b E" style="left:632px;top:679px;width:42px">300</div>
<div class="b B" style="left:447px;top:702px;width:42px">SL #2:</div><div class="b W" style="left:493px;top:702px;width:42px">vatr0</div><div class="b W" style="left:539px;top:702px;width:42px">vatr1</div><div class="b B" style="left:585px;top:702px;width:42px">point</div><div class="b E" style="left:632px;top:703px;width:42px">300</div>
<div class="b B" style="left:447px;top:726px;width:42px">SL #3:</div><div class="b W" style="left:493px;top:726px;width:42px">vatr0</div><div class="b W" style="left:539px;top:726px;width:42px">vatr1</div><div class="b B" style="left:585px;top:726px;width:42px">point</div><div class="b E" style="left:632px;top:727px;width:42px">300</div>
<div class="b B" style="left:447px;top:750px;width:112px">Точки входа</div><div class="b B" style="left:563px;top:750px;width:54px">точка#1</div><div class="b B" style="left:621px;top:750px;width:54px">точка#2</div>
<div class="b B" style="left:447px;top:774px;width:170px">макс.отклонение от h/l. дня</div><div class="b E" style="left:622px;top:775px;width:52px">1000</div>
<div class="b B" style="left:447px;top:798px;width:170px">мин.отклонение от h/l. дня</div><div class="b E" style="left:622px;top:799px;width:52px">100</div>

<!-- purple panel -->
<div class="f" style="left:700px;top:563px;width:249px;height:264px;background:#6a5acd"></div>
<div class="f" style="left:706px;top:569px;width:237px;height:16px;background:#fff"></div>
<div class="f P" style="left:709px;top:572px;width:231px;height:10px;border:2px solid;border-color:#8a78f4 #5a48c8 #5a48c8 #8a78f4"></div>
<div class="f" style="left:706px;top:593px;width:237px;height:74px;background:#fff"></div>
<div class="f" style="left:706px;top:675px;width:237px;height:146px;background:#fff"></div>
<div class="b P" style="left:709px;top:596px;width:111px">виз.VATR #1:</div><div class="b S" style="left:824px;top:596px;width:56px">on</div><div class="b P" style="left:883px;top:596px;width:56px">off</div>
<div class="b P" style="left:709px;top:620px;width:111px">виз.VATR #2:</div><div class="b S" style="left:824px;top:620px;width:56px">on</div><div class="b P" style="left:883px;top:620px;width:56px">off</div>
<div class="b P" style="left:709px;top:644px;width:111px">виз.VATR #3:</div><div class="b S" style="left:824px;top:644px;width:56px">on</div><div class="b P" style="left:883px;top:644px;width:56px">off</div>
<div class="b P" style="left:709px;top:678px;width:111px">arrow #1:</div><div class="b H" style="left:824px;top:678px;width:56px">on</div><div class="b P" style="left:883px;top:678px;width:56px">off</div>
<div class="b P" style="left:709px;top:702px;width:111px">arrow #2:</div><div class="b H" style="left:824px;top:702px;width:56px">on</div><div class="b P" style="left:883px;top:702px;width:56px">off</div>
<div class="b P" style="left:709px;top:726px;width:111px">arrow #3:</div><div class="b H" style="left:824px;top:726px;width:56px">on</div><div class="b P" style="left:883px;top:726px;width:56px">off</div>
<div class="b P" style="left:709px;top:750px;width:111px">fractal #1:</div><div class="b P" style="left:824px;top:750px;width:56px">on</div><div class="b H" style="left:883px;top:750px;width:56px">off</div>
<div class="b P" style="left:709px;top:774px;width:111px">fractal #2:</div><div class="b H" style="left:824px;top:774px;width:56px">on</div><div class="b P" style="left:883px;top:774px;width:56px">off</div>
<div class="b P" style="left:709px;top:798px;width:111px">fractal #3:</div><div class="b H" style="left:824px;top:798px;width:56px">on</div><div class="b P" style="left:883px;top:798px;width:56px">off</div>

<!-- dialog -->
<div class="f" style="left:1260px;top:25px;width:464px;height:254px;border-radius:7px;border:1px solid #27405a;background:linear-gradient(#b4cdea 0,#cfdff0 28px,#d4e0ee 68px,#56708e 76px,#1e2c3e 90px,#121c28 100%)"></div>
<div class="f" style="left:1643px;top:25px;width:74px;height:20px;border:1px solid #7a94b0;border-top:0;border-radius:0 0 5px 5px;background:linear-gradient(#cfe0f2,#b8cfe8)"></div>
<div class="s" style="left:1670px;top:25px;width:1px;height:19px;background:#7a94b0"></div>
<div class="t" style="left:1652px;top:27px;font-weight:bold;font-size:14px;color:#334">?</div><div class="t" style="left:1688px;top:27px;font-weight:bold;font-size:14px;color:#334">×</div>
<div class="t" style="left:1288px;top:33px;font-size:12px;color:#111">Алерт</div>
<div class="f" style="left:1266px;top:54px;width:452px;height:220px;background:#f0f0f0;border:1px solid #5a7a98"></div>
<svg style="position:absolute;left:0;top:0" width="1886" height="280" viewBox="0 0 1886 280">
<defs><linearGradient id="bg" x1="0" x2="1" y1="0" y2="1"><stop offset="0" stop-color="#fbeaa0"/><stop offset=".5" stop-color="#e0b040"/><stop offset="1" stop-color="#a87818"/></linearGradient></defs>
<path d="M1290 64Q1297 63 1300 72Q1310 78 1311 88Q1313 94 1323 98Q1320 103 1300 105Q1285 108 1275 109Q1282 98 1282 88Q1282 76 1288 71Q1287 66 1290 64Z" fill="url(#bg)" stroke="#a07820" stroke-width=".5"/>
<circle cx="1299.500" cy="107" r="3" fill="#d8a020"/>
<path d="M1275 34q3 0 3.500 4q.5 3 2.500 6h-12q2-3 2.500-6q.5-4 3.500-4z" fill="#f0c040" stroke="#b08010"/>
<path d="M1698 80l3-4 3 4zM1698 126l3 4 3-4zM1697 156l3-4 3 4zM1697 221l3 4 3-4z" fill="#808080"/>
</svg>
<div class="t" style="left:1337px;top:71px;font-size:11px;letter-spacing:.1px;color:#222">включение таймера (signal#1, vector:sell</div>
<div class="f" style="left:1275px;top:144px;width:435px;height:89px;background:#fff;border:1px solid #909090"></div>
<div class="f" style="left:1276px;top:146px;width:415px;height:20px;background:#ebebeb;border-bottom:1px solid #c8c8c8"></div>
<div class="f" style="left:1276px;top:166px;width:415px;height:20px;background:#fff;border-bottom:1px solid #c8c8c8"></div>
<div class="f" style="left:1276px;top:186px;width:415px;height:20px;background:#ebebeb;border-bottom:1px solid #c8c8c8"></div>
<div class="f" style="left:1276px;top:206px;width:415px;height:20px;background:#fff;border-bottom:1px solid #c8c8c8"></div>
<div class="s" style="left:1358px;top:146px;width:1px;height:80px;background:#c8c8c8"></div><div class="s" style="left:1461px;top:146px;width:1px;height:80px;background:#c8c8c8"></div>
<div class="f" style="left:1691px;top:145px;width:18px;height:87px;background:#f0f0f0"></div>
<div class="f" style="left:1692px;top:198px;width:15px;height:15px;background:#e8e8e8;border:1px solid #aaa"></div>
<svg style="position:absolute;left:1692px;top:150px" width="16" height="80"><path d="M5 8l3-4 3 4zM5 70l3 4 3-4z" fill="#707070"/></svg>
<div class="d" style="left:1280px;top:149px">2020.08.20 ...</div><div class="d" style="left:1361px;top:149px">MasterTradePRO...</div><div class="d" style="left:1465px;top:149px;font-size:11px;letter-spacing:.1px">signal#1: сигнал от инд. появился. тайме...</div>
<div class="d" style="left:1280px;top:169px">2020.08.20 ...</div><div class="d" style="left:1361px;top:169px">MasterTradePRO...</div><div class="d" style="left:1465px;top:169px;font-size:11px;letter-spacing:-.1px">AUDUSD D1 signal SELL</div>
<div class="d" style="left:1280px;top:189px">2020.08.20 ...</div><div class="d" style="left:1361px;top:189px">MasterTradePRO...</div><div class="d" style="left:1465px;top:189px;font-size:11px;letter-spacing:.1px">сделка не открыта по причине:</div>
<div class="d" style="left:1280px;top:209px">2020.08.20 ...</div><div class="d" style="left:1361px;top:209px">MasterTradePRO...</div><div class="d" style="left:1465px;top:209px;font-size:11px;letter-spacing:.1px">включение таймера (signal#1, vector:sell</div>
<div class="f" style="left:1637px;top:243px;width:72px;height:21px;border:2px solid #3fb0ec;border-radius:3px;background:linear-gradient(#eaf6fd,#bde4f8);text-align:center;line-height:17px;font-size:12px;color:#222">Закрыть</div>

<!-- chart tabs -->
<div class="f" style="left:172px;top:857px;width:1714px;height:19px;background:#f0f0f0"></div>
<div class="f" style="left:547px;top:856px;width:97px;height:20px;background:#fff;border:1px solid #000"></div>
<div class="t g7" style="left:186px;top:860px;font-size:12px;letter-spacing:-.25px">EURUSD,M15</div><div class="s" style="left:267px;top:860px;width:1px;height:14px"></div>
<div class="t g7" style="left:279px;top:860px;font-size:12px;letter-spacing:-.25px">GBPUSD,M15</div><div class="s" style="left:360px;top:860px;width:1px;height:14px"></div>
<div class="t g7" style="left:371px;top:860px;font-size:12px;letter-spacing:-.25px">USDCHF,M30</div><div class="s" style="left:453px;top:860px;width:1px;height:14px"></div>
<div class="t g7" style="left:465px;top:860px;font-size:12px;letter-spacing:-.25px">EURCHF,M30</div>
<div class="t" style="left:559px;top:860px;font-size:12px;letter-spacing:-.25px">AUDUSD,M30</div>
<div class="t g7" style="left:656px;top:860px;font-size:12px;letter-spacing:-.25px">USDCAD,M30</div><div class="s" style="left:740px;top:860px;width:1px;height:14px"></div>
<div class="t g7" style="left:752px;top:860px;font-size:12px;letter-spacing:-.25px">USDJPY,M30</div>
<div class="t" style="left:1855px;top:860px;font-size:8px;color:#999">◄</div><div class="t" style="left:1877px;top:860px;font-size:8px;color:#999">►</div>

<!-- terminal table -->
<div class="s" style="left:0;top:880px;width:1886px;height:2px;background:#a0a0a0"></div>
<div class="f" style="left:0;top:882px;width:1872px;height:22px;background:linear-gradient(#fff,#fff 40%,#f2f2f2 50%,#f0f0f0);border-bottom:1px solid #c8c8c8"></div>
<div class="f" style="left:0;top:904px;width:1872px;height:20px;background:#fff;border-bottom:1px solid #c8c8c8"></div>
<div class="f" style="left:0;top:924px;width:1872px;height:20px;background:#ebebeb;border-bottom:1px solid #c8c8c8"></div>
<div class="f" style="left:0;top:944px;width:1872px;height:20px;background:#fff"></div>
<div class="f" style="left:0;top:964px;width:1872px;height:21px;background:#c4c4c4"></div>
<div class="f" style="left:1872px;top:882px;width:14px;height:103px;background:#f0f0f0"></div>
<div class="f" style="left:1872px;top:948px;width:14px;height:19px;background:#e4e4e4;border:1px solid #aaa"></div>
<div class="t" style="left:1875px;top:884px;font-size:7px;color:#555">▲</div><div class="t" style="left:1875px;top:973px;font-size:7px;color:#555">▼</div>
<div class="v" style="left:150px;top:882px;height:82px"></div><div class="v" style="left:288px;top:882px;height:82px"></div><div class="v" style="left:396px;top:882px;height:82px"></div><div class="v" style="left:488px;top:882px;height:82px"></div><div class="v" style="left:642px;top:882px;height:82px"></div><div class="v" style="left:796px;top:882px;height:82px"></div><div class="v" style="left:950px;top:882px;height:82px"></div><div class="v" style="left:1104px;top:882px;height:82px"></div><div class="v" style="left:1244px;top:882px;height:82px"></div><div class="v" style="left:1398px;top:882px;height:82px"></div><div class="v" style="left:1773px;top:882px;height:82px"></div>
<div class="c" style="left:-3px;top:886px;letter-spacing:-.2px">Время</div><div class="c" style="right:1603px;top:886px;letter-spacing:-.2px">Символ</div><div class="c" style="right:1495px;top:886px;letter-spacing:-.2px">Тикет</div><div class="c" style="right:1403px;top:886px;letter-spacing:-.2px">Тип</div><div class="c" style="right:1249px;top:886px;letter-spacing:-.2px">Объем</div><div class="c" style="right:1095px;top:886px;letter-spacing:-.2px">Цена</div><div class="c" style="right:941px;top:886px;letter-spacing:-.2px">S / L</div><div class="c" style="right:787px;top:886px;letter-spacing:-.2px">T / P</div><div class="c" style="right:671px;top:886px;letter-spacing:-.2px">Время</div><div class="t" style="left:1229px;top:887px;font-size:8px;color:#444">▲</div><div class="c" style="right:494px;top:886px;letter-spacing:-.2px">Цена</div><div class="c" style="right:118px;top:886px;letter-spacing:-.2px">Прибыль</div><div class="c" style="right:18px;top:886px;letter-spacing:-.2px">Изменение</div>
<svg style="position:absolute;left:0;top:905px" width="8" height="60"><path d="M0 2h5v11l-3 3H0z" fill="#fbeadf" stroke="#e05020"/><path d="M0 22h5v11l-3 3H0z" fill="#dceefa" stroke="#2080c0"/><path d="M0 42h5v11l-3 3H0z" fill="#fbeadf" stroke="#e05020"/></svg>
<div class="c" style="left:12px;top:907px">2020.08.19 19:31:12</div><div class="c" style="right:1601px;top:907px;letter-spacing:-.2px">gbpusd</div><div class="c" style="right:1493px;top:907px">62746599</div><div class="c" style="right:1401px;top:907px;letter-spacing:-.2px">sell</div><div class="c" style="right:1248px;top:907px">0.1</div><div class="c" style="right:1093px;top:907px">1.31681</div><div class="c" style="right:645px;top:907px">2020.08.20 04:38:44</div><div class="c" style="right:492px;top:907px">1.30988</div><div class="c" style="right:117px;top:907px;color:#00f">69.30</div><div class="c" style="right:16px;top:907px;color:#00f">0.53 %</div>
<div class="c" style="left:12px;top:927px">2020.08.20 04:39:13</div><div class="c" style="right:1601px;top:927px;letter-spacing:-.2px">usdchf</div><div class="c" style="right:1493px;top:927px">62767966</div><div class="c" style="right:1401px;top:927px;letter-spacing:-.2px">buy</div><div class="c" style="right:1248px;top:927px">0.1</div><div class="c" style="right:1093px;top:927px">0.91578</div><div class="c" style="right:645px;top:927px">2020.08.20 15:15:52</div><div class="c" style="right:492px;top:927px">0.91020</div><div class="c" style="right:117px;top:927px;color:#f00">-61.31</div><div class="c" style="right:16px;top:927px;color:#f00">-0.61 %</div>
<div class="c" style="left:12px;top:947px">2020.08.20 15:40:18</div><div class="c" style="right:1601px;top:947px;letter-spacing:-.2px">audusd</div><div class="c" style="right:1493px;top:947px">62794742</div><div class="c" style="right:1401px;top:947px;letter-spacing:-.2px">sell</div><div class="c" style="right:1248px;top:947px">0.2</div><div class="c" style="right:1093px;top:947px">0.71666</div><div class="c" style="right:645px;top:947px">2020.08.20 16:05:12</div><div class="c" style="right:492px;top:947px">0.71464</div><div class="c" style="right:117px;top:947px;color:#00f">40.40</div><div class="c" style="right:16px;top:947px;color:#00f">0.28 %</div>
<div class="c" style="left:12px;top:968px;font-weight:bold;font-size:12px;letter-spacing:0;color:#111">Прибыль: -220.58 &nbsp;Кредит: 0.00 &nbsp;Депозит: 1 000.00 &nbsp;Снятие: 0.00 &nbsp;Баланс: 779.42</div>
<div class="c" style="right:117px;top:968px;font-weight:bold;color:#111">216.41</div>

<!-- bottom tabs -->
<div class="s" style="left:0;top:986px;width:1886px;height:1px;background:#000"></div>
<div class="f" style="left:127px;top:986px;width:67px;height:21px;background:#fff;border:1px solid #000;border-top:0"></div>
<div class="t g7" style="left:3px;top:990px;font-size:12px;letter-spacing:-.25px">Торговля</div><div class="s" style="left:66px;top:991px;width:1px;height:14px"></div>
<div class="t g7" style="left:75px;top:990px;font-size:12px;letter-spacing:-.25px">Активы</div>
<div class="t" style="left:136px;top:990px;font-size:12px;letter-spacing:-.1px">История</div>
<div class="t g7" style="left:203px;top:990px;font-size:12px;letter-spacing:-.25px">Новости</div><div class="t" style="left:252px;top:995px;font-size:9px;font-weight:bold;color:#f02020">64</div><div class="s" style="left:272px;top:991px;width:1px;height:14px"></div>
<div class="t g7" style="left:282px;top:990px;font-size:12px;letter-spacing:-.25px">Почта</div><div class="t" style="left:318px;top:995px;font-size:9px;font-weight:bold;color:#f02020">7</div><div class="s" style="left:333px;top:991px;width:1px;height:14px"></div>
<div class="t g7" style="left:343px;top:990px;font-size:12px;letter-spacing:-.25px">Календарь</div><div class="s" style="left:412px;top:991px;width:1px;height:14px"></div>
<div class="t g7" style="left:421px;top:990px;font-size:12px;letter-spacing:-.25px">Алерты</div><div class="s" style="left:473px;top:991px;width:1px;height:14px"></div>
<div class="t g7" style="left:483px;top:990px;font-size:12px;letter-spacing:-.25px">Статьи</div><div class="s" style="left:530px;top:991px;width:1px;height:14px"></div>
<div class="t g7" style="left:540px;top:990px;font-size:12px;letter-spacing:-.25px">Библиотека</div><div class="s" style="left:615px;top:991px;width:1px;height:14px"></div>
<div class="t g7" style="left:625px;top:990px;font-size:12px;letter-spacing:-.25px">VPS</div><div class="s" style="left:655px;top:991px;width:1px;height:14px"></div>
<div class="t g7" style="left:665px;top:990px;font-size:12px;letter-spacing:-.25px">Эксперты</div><div class="s" style="left:728px;top:991px;width:1px;height:14px"></div>
<div class="t g7" style="left:738px;top:990px;font-size:12px;letter-spacing:-.25px">Журнал</div>
<div class="t" style="left:1783px;top:990px;font-size:12px;letter-spacing:-.15px;color:#222">Тестер стратегий</div>

<!-- hand-drawn marks -->
<svg style="position:absolute;left:0;top:0" width="1886" height="1010" viewBox="0 0 1886 1010" fill="none" stroke="#3f48cc" stroke-linecap="round" stroke-linejoin="round">
<path stroke-width="4" d="M11 963Q20 961 40 963T90 965T125 962L141 961"/>
<path stroke-width="4" d="M250 944Q240 944 235 946Q233 955 236 959Q245 966 262 966T298 966Q300 955 296 948Q285 940 270 941T254 944"/>
<path stroke-width="5" d="M1092 977H1165Q1180 977 1190 976T1330 976Q1340 980 1400 979T1500 978Q1510 973 1530 973.500T1780 973T1875 972"/>
</svg>
</div></body></html>
